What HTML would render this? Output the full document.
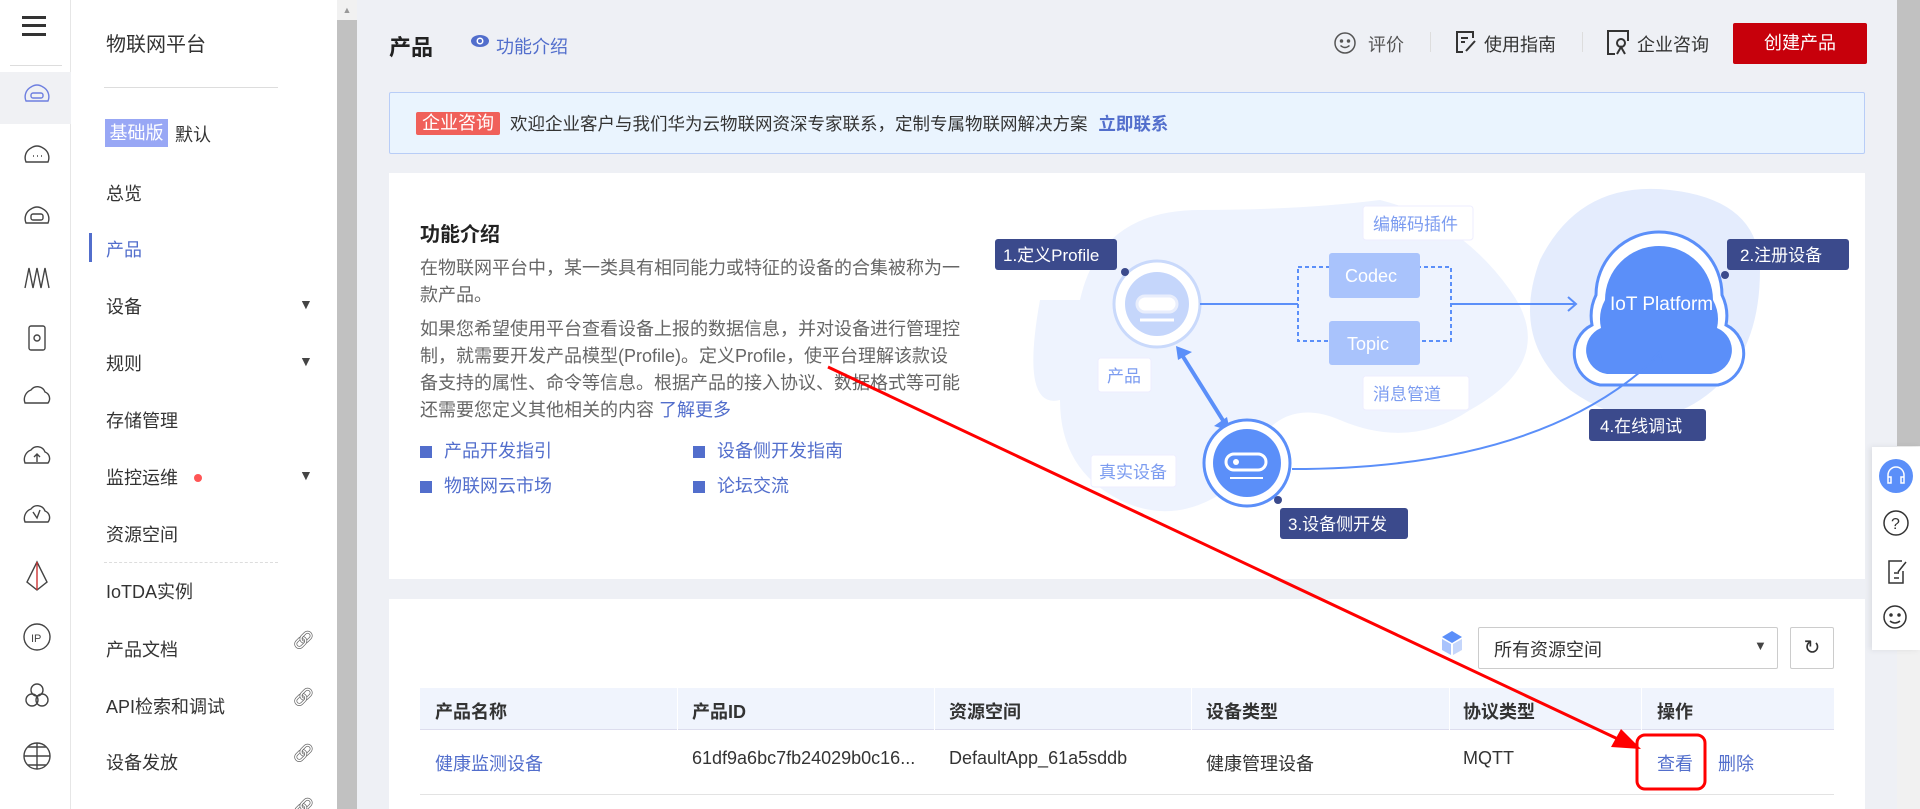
<!DOCTYPE html>
<html style="overflow:hidden"><head><meta charset="utf-8"><style>
*{margin:0;padding:0;box-sizing:border-box}
html,body{overflow:hidden}
body{width:1920px;height:809px;background:#eef0f5;font-family:"Liberation Sans","Noto Sans CJK SC",sans-serif;color:#333;position:relative;font-size:18px}
.a{position:absolute;white-space:nowrap}
#ib{left:0;top:0;width:71px;height:809px;background:#fff;border-right:1px solid #e6e6e6}
#sb{left:71px;top:0;width:266px;height:809px;background:#fff}
#sc{left:337px;top:0;width:20px;height:809px;background:#c1c1c1}
.si{left:106px;font-size:18px;color:#333}
.arr{left:299px;font-size:14px;color:#444}
.lk{left:292px;font-size:18px;color:#666}
.card{background:#fff}
.p{color:#666;font-size:18px;line-height:27px}
.blue{color:#526ecc}
.sq{display:inline-block;width:12px;height:12px;background:#526ecc;margin-right:12px;vertical-align:-1px}
.th{font-weight:bold;color:#333}
</style></head><body>
<div class="a" id="ib"></div>
<div class="a" style="left:0;top:72px;width:71px;height:52px;background:#f0f1f4"></div>
<div class="a" style="left:22px;top:16px;width:24px;height:3px;background:#333;box-shadow:0 8px 0 #333,0 17px 0 #333"></div>
<div class="a" style="left:10px;top:65px;width:52px;height:1px;background:#ddd"></div>
<svg class="a" style="left:0;top:0" width="71" height="809" fill="none" stroke="#444" stroke-width="1.4">
<g stroke="#6e7fe0"><path d="M26 101a11 11 0 0 1 5-14q6-4 12 0a11 11 0 0 1 5 14z"/><rect x="31" y="93" width="12" height="5" rx="2"/></g>
<path d="M26 162a11 11 0 0 1 5-14q6-4 12 0a11 11 0 0 1 5 14z"/><path d="M33 156h1M37 156h1M41 156h1"/>
<path d="M26 223a11 11 0 0 1 5-14q6-4 12 0a11 11 0 0 1 5 14z"/><rect x="31" y="214" width="12" height="6" rx="2"/>
<path d="M25 288l4-20 4 20 4-20 4 20 4-20 4 20"/>
<rect x="29" y="326" width="16" height="24" rx="2"/><circle cx="37" cy="338" r="3"/>
<path d="M25 403a10 10 0 0 1 6-13 8 8 0 0 1 14 2 7 7 0 0 1 3 11z"/>
<path d="M25 463a10 10 0 0 1 6-13 8 8 0 0 1 14 2 7 7 0 0 1 3 11z"/><path d="M37 462v-8M34 457l3-3 3 3"/>
<path d="M25 522a10 10 0 0 1 6-13 8 8 0 0 1 14 2 7 7 0 0 1 3 11z"/><path d="M33 512l4 6 3-8"/>
<path d="M37 562l-10 20 10 8 10-8z"/><path d="M37 562v28" stroke="#c33"/>
<circle cx="37" cy="637" r="13"/><text x="31" y="642" font-size="11" fill="#444" stroke="none" font-family="Liberation Sans">IP</text>
<circle cx="37" cy="690" r="6"/><circle cx="32" cy="700" r="6"/><circle cx="42" cy="700" r="6"/>
<circle cx="37" cy="756" r="13"/><path d="M24 756h26M37 743v26M28 747h18M28 765h18"/>
</svg>
<div class="a" id="sb"></div>
<div class="a" style="left:106px;top:28px;font-size:20px;color:#333">物联网平台</div>
<div class="a" style="left:104px;top:87px;width:174px;height:1px;background:#ddd"></div>
<div class="a" style="left:105px;top:119px;width:63px;height:28px;background:#98a7f5;color:#fff;font-size:18px;line-height:28px;text-align:center">基础版</div>
<div class="a si" style="left:175px;top:121px">默认</div>
<div class="a si" style="top:180px">总览</div>
<div class="a" style="left:89px;top:233px;width:3px;height:29px;background:#526ecc"></div>
<div class="a si" style="top:236px;color:#526ecc">产品</div>
<div class="a si" style="top:293px">设备</div><div class="a arr" style="top:296px">▼</div>
<div class="a si" style="top:350px">规则</div><div class="a arr" style="top:353px">▼</div>
<div class="a si" style="top:407px">存储管理</div>
<div class="a si" style="top:464px">监控运维</div><div class="a" style="left:194px;top:474px;width:8px;height:8px;border-radius:50%;background:#f55"></div><div class="a arr" style="top:467px">▼</div>
<div class="a si" style="top:521px">资源空间</div>
<div class="a" style="left:104px;top:562px;width:174px;border-top:1px dashed #ddd"></div>
<div class="a si" style="top:578px">IoTDA实例</div>
<div class="a si" style="top:636px">产品文档</div><div class="a lk" style="top:630px">🔗︎</div>
<div class="a si" style="top:693px">API检索和调试</div><div class="a lk" style="top:687px">🔗︎</div>
<div class="a si" style="top:749px">设备发放</div><div class="a lk" style="top:743px">🔗︎</div>
<div class="a lk" style="top:797px">🔗︎</div>
<div class="a" id="sc"></div>
<div class="a" style="left:337px;top:0;width:20px;height:20px;background:#f1f1f1;color:#999;font-size:9px;text-align:center;line-height:20px">▲</div>
<div class="a" style="left:1897px;top:0;width:23px;height:809px;background:#f1f1f1"></div>
<div class="a" style="left:1897px;top:0;width:23px;height:446px;background:#c1c1c1"></div>
<div class="a" style="left:389px;top:30px;font-size:22px;font-weight:bold;color:#222">产品</div>
<svg class="a" style="left:470px;top:33px" width="20" height="16"><ellipse cx="10" cy="8" rx="9" ry="6" fill="#526ecc"/><circle cx="10" cy="8" r="3.5" fill="#fff"/><circle cx="10" cy="8" r="2" fill="#526ecc"/></svg>
<div class="a blue" style="left:496px;top:33px;font-size:18px">功能介绍</div>
<svg class="a" style="left:1333px;top:31px" width="24" height="24" fill="none" stroke="#555" stroke-width="1.5"><circle cx="12" cy="12" r="10"/><circle cx="8.5" cy="10" r="1" fill="#555"/><circle cx="15.5" cy="10" r="1" fill="#555"/><path d="M7.5 14.5q4.5 4 9 0"/></svg>
<div class="a" style="left:1368px;top:31px;color:#555">评价</div>
<div class="a" style="left:1430px;top:32px;width:1px;height:20px;background:#ddd"></div>
<svg class="a" style="left:1454px;top:30px" width="24" height="24" fill="none" stroke="#333" stroke-width="2"><path d="M19 8V2H3v20h6"/><path d="M7 8h7M7 12h4M12 21l9-10"/></svg>
<div class="a" style="left:1484px;top:31px;color:#333">使用指南</div>
<div class="a" style="left:1582px;top:32px;width:1px;height:20px;background:#ddd"></div>
<svg class="a" style="left:1606px;top:29px" width="26" height="26" fill="none" stroke="#333" stroke-width="2"><path d="M9 25H2V2h20v10"/><circle cx="15" cy="14" r="4"/><path d="M11 25l4-7 4 7"/></svg>
<div class="a" style="left:1637px;top:31px;color:#333">企业咨询</div>
<div class="a" style="left:1733px;top:23px;width:134px;height:41px;background:#c7000b;color:#fff;border-radius:2px;text-align:center;line-height:41px;font-size:18px">创建产品</div>
<div class="a" style="left:389px;top:92px;width:1476px;height:62px;background:#eaf4fe;border:1px solid #b8cdf7;border-radius:2px"></div>
<div class="a" style="left:416px;top:112px;width:84px;height:23px;background:#f0605a;color:#fff;font-size:18px;line-height:23px;text-align:center;border-radius:2px">企业咨询</div>
<div class="a" style="left:510px;top:111px;color:#333;font-size:17.5px">欢迎企业客户与我们华为云物联网资深专家联系，定制专属物联网解决方案 <b class="blue" style="margin-left:6px">立即联系</b></div>
<div class="a card" style="left:389px;top:173px;width:1476px;height:406px"></div>
<div class="a" style="left:420px;top:218px;font-size:20px;font-weight:bold;color:#222">功能介绍</div>
<div class="a p" style="left:420px;top:255px;width:546px;white-space:normal">在物联网平台中，某一类具有相同能力或特征的设备的合集被称为一款产品。</div>
<div class="a p" style="left:420px;top:316px;width:546px;white-space:normal">如果您希望使用平台查看设备上报的数据信息，并对设备进行管理控制，就需要开发产品模型(Profile)。定义Profile，使平台理解该款设备支持的属性、命令等信息。根据产品的接入协议、数据格式等可能还需要您定义其他相关的内容 <span class="blue">了解更多</span></div>
<div class="a blue" style="left:420px;top:437px"><span class="sq"></span>产品开发指引</div>
<div class="a blue" style="left:693px;top:437px"><span class="sq"></span>设备侧开发指南</div>
<div class="a blue" style="left:420px;top:472px"><span class="sq"></span>物联网云市场</div>
<div class="a blue" style="left:693px;top:472px"><span class="sq"></span>论坛交流</div>
<svg class="a" style="left:0;top:0" width="1920" height="809" font-family="Liberation Sans,Noto Sans CJK SC,sans-serif">
<path d="M1080 300q20-90 120-90t180-10q80 20 130 90t-40 120q-60 40-130 10t-100 60q-60 50-120 20t-60-100q-40 10-20-100z" fill="#eef3fe"/>
<path d="M1540 260q40-80 130-70t90 80q0 90-60 130t-130-10q-60-50-30-130z" fill="#e4ecfd"/>
<g font-size="17">
<rect x="995" y="239" width="122" height="31" rx="3" fill="#3b4a8c"/><text x="1003" y="261" fill="#fff">1.定义Profile</text>
<rect x="1727" y="239" width="122" height="31" rx="3" fill="#3b4a8c"/><text x="1740" y="261" fill="#fff">2.注册设备</text>
<rect x="1280" y="508" width="128" height="31" rx="3" fill="#3b4a8c"/><text x="1288" y="530" fill="#fff">3.设备侧开发</text>
<rect x="1589" y="409" width="117" height="32" rx="3" fill="#3b4a8c"/><text x="1600" y="432" fill="#fff">4.在线调试</text>
</g>
<circle cx="1157" cy="304" r="43" fill="#fff" stroke="#c9d9fb" stroke-width="3"/><circle cx="1157" cy="304" r="32" fill="#c5d6fb"/>
<rect x="1137" y="296" width="40" height="16" rx="8" fill="#fff" stroke="#e9eefc" stroke-width="3"/><path d="M1140 320h34" stroke="#fff" stroke-width="3"/>
<circle cx="1125" cy="272" r="4" fill="#3b4a8c"/>
<path d="M1200 304h98" stroke="#5b8ff9" stroke-width="2"/>
<rect x="1298" y="267" width="153" height="74" fill="none" stroke="#5b8ff9" stroke-width="2" stroke-dasharray="4 3"/>
<rect x="1329" y="253" width="91" height="45" rx="3" fill="#a9c3fc"/><text x="1345" y="282" fill="#fff" font-size="18">Codec</text>
<rect x="1329" y="321" width="91" height="44" rx="3" fill="#a9c3fc"/><text x="1347" y="350" fill="#fff" font-size="18">Topic</text>
<rect x="1363" y="206" width="110" height="34" rx="3" fill="#fff" stroke="#eef"/><text x="1373" y="230" fill="#7c9cf0" font-size="17">编解码插件</text>
<rect x="1363" y="376" width="106" height="34" rx="3" fill="#fff" stroke="#eef"/><text x="1373" y="400" fill="#7c9cf0" font-size="17">消息管道</text>
<path d="M1451 304h125M1568 297l8 7-8 7" fill="none" stroke="#5b8ff9" stroke-width="2"/>
<path d="M1600 385a32 32 0 0 1-8-60 48 48 0 0 1 4-30 55 55 0 0 1 126 0 48 48 0 0 1 4 30 32 32 0 0 1-8 60z" fill="#fff" stroke="#5b8ff9" stroke-width="3"/>
<path d="M1607 374a24 24 0 0 1-6-46 40 40 0 0 1 4-28 47 47 0 0 1 108 0 40 40 0 0 1 4 28 24 24 0 0 1-6 46z" fill="#5b8ff9"/>
<text x="1610" y="310" fill="#fff" font-size="19">IoT Platform</text>
<circle cx="1725" cy="275" r="4" fill="#3b4a8c"/>
<rect x="1098" y="358" width="53" height="34" rx="3" fill="#fff" stroke="#eef"/><text x="1107" y="382" fill="#7c9cf0" font-size="17">产品</text>
<path d="M1182 355l42 67" stroke="#5b8ff9" stroke-width="4"/><path d="M1176 346l16 6-14 8zM1230 431l-16-5 13-9z" fill="#5b8ff9"/>
<circle cx="1247" cy="463" r="43" fill="#fff" stroke="#5b8ff9" stroke-width="3"/><circle cx="1247" cy="463" r="34" fill="#5b8ff9"/>
<rect x="1226" y="454" width="40" height="16" rx="8" fill="none" stroke="#fff" stroke-width="3"/><circle cx="1236" cy="462" r="3" fill="#fff"/><path d="M1230 478h33" stroke="#fff" stroke-width="2"/>
<circle cx="1278" cy="500" r="4" fill="#3b4a8c"/>
<rect x="1091" y="455" width="85" height="32" rx="3" fill="#fff" stroke="#eef"/><text x="1099" y="478" fill="#7c9cf0" font-size="17">真实设备</text>
<path d="M1292 469q250 0 367-114" fill="none" stroke="#5b8ff9" stroke-width="2"/><path d="M1652 360l7-8 3 10" fill="none" stroke="#5b8ff9" stroke-width="2"/>
</svg>
<div class="a card" style="left:389px;top:599px;width:1476px;height:210px"></div>
<svg class="a" style="left:1440px;top:630px" width="24" height="26"><path d="M12 1l10 6-10 6-10-6z" fill="#5b8ff9"/><path d="M2 9l9 5v11l-9-5z" fill="#a9c3fc"/><path d="M22 9l-9 5v11l9-5z" fill="#c5d6fb"/></svg>
<div class="a" style="left:1478px;top:627px;width:300px;height:42px;border:1px solid #ccc;border-radius:2px"></div>
<div class="a" style="left:1494px;top:636px;color:#333">所有资源空间</div>
<div class="a" style="left:1754px;top:638px;font-size:13px;color:#444">▼</div>
<div class="a" style="left:1790px;top:627px;width:44px;height:42px;border:1px solid #ccc;border-radius:2px;text-align:center;line-height:40px;font-size:20px;color:#333">↻</div>
<div class="a" style="left:420px;top:688px;width:1414px;height:42px;background:#f0f4fd;border-bottom:1px solid #dde"></div>
<div class="a" style="left:677px;top:688px;width:1px;height:42px;background:#fff"></div>
<div class="a" style="left:934px;top:688px;width:1px;height:42px;background:#fff"></div>
<div class="a" style="left:1191px;top:688px;width:1px;height:42px;background:#fff"></div>
<div class="a" style="left:1449px;top:688px;width:1px;height:42px;background:#fff"></div>
<div class="a" style="left:1641px;top:688px;width:1px;height:42px;background:#fff"></div>
<div class="a th" style="left:435px;top:698px">产品名称</div>
<div class="a th" style="left:692px;top:698px">产品ID</div>
<div class="a th" style="left:949px;top:698px">资源空间</div>
<div class="a th" style="left:1206px;top:698px">设备类型</div>
<div class="a th" style="left:1463px;top:698px">协议类型</div>
<div class="a th" style="left:1657px;top:698px">操作</div>
<div class="a blue" style="left:435px;top:750px">健康监测设备</div>
<div class="a" style="left:692px;top:748px">61df9a6bc7fb24029b0c16...</div>
<div class="a" style="left:949px;top:748px">DefaultApp_61a5sddb</div>
<div class="a" style="left:1206px;top:750px">健康管理设备</div>
<div class="a" style="left:1463px;top:748px">MQTT</div>
<div class="a blue" style="left:1657px;top:750px">查看</div>
<div class="a blue" style="left:1718px;top:750px">删除</div>
<div class="a" style="left:420px;top:794px;width:1414px;height:1px;background:#e3e3e3"></div>
<svg class="a" style="left:0;top:0" width="1920" height="809"><path d="M828 367L1620 740" stroke="#f00" stroke-width="3"/><path d="M1641 749l-30-2 10-18z" fill="#f00"/>
<rect x="1637" y="735" width="68" height="54" rx="8" fill="none" stroke="#f00" stroke-width="3"/></svg>
<div class="a" style="left:1872px;top:447px;width:48px;height:203px;background:#fff;box-shadow:-2px 0 6px rgba(0,0,0,.08)"></div>
<svg class="a" style="left:1872px;top:447px" width="48" height="203" fill="none" stroke="#333" stroke-width="1.5">
<circle cx="24" cy="29" r="17" fill="#5b8ff9" stroke="none"/><path d="M16 32v-4a8 8 0 0 1 16 0v4M16 30h3v6h-3zM29 30h3v6h-3z" stroke="#fff"/>
<circle cx="24" cy="76" r="12"/><text x="19" y="82" font-size="16" fill="#333" stroke="none" font-family="Liberation Sans">?</text>
<path d="M30 114h-13v22h14v-12M22 126h5M22 131h5M26 125l8-10"/>
<circle cx="23" cy="170" r="11"/><circle cx="19" cy="168" r="1" fill="#333"/><circle cx="27" cy="168" r="1" fill="#333"/><path d="M18 174q5 4 10 0"/>
</svg>
</body></html>
